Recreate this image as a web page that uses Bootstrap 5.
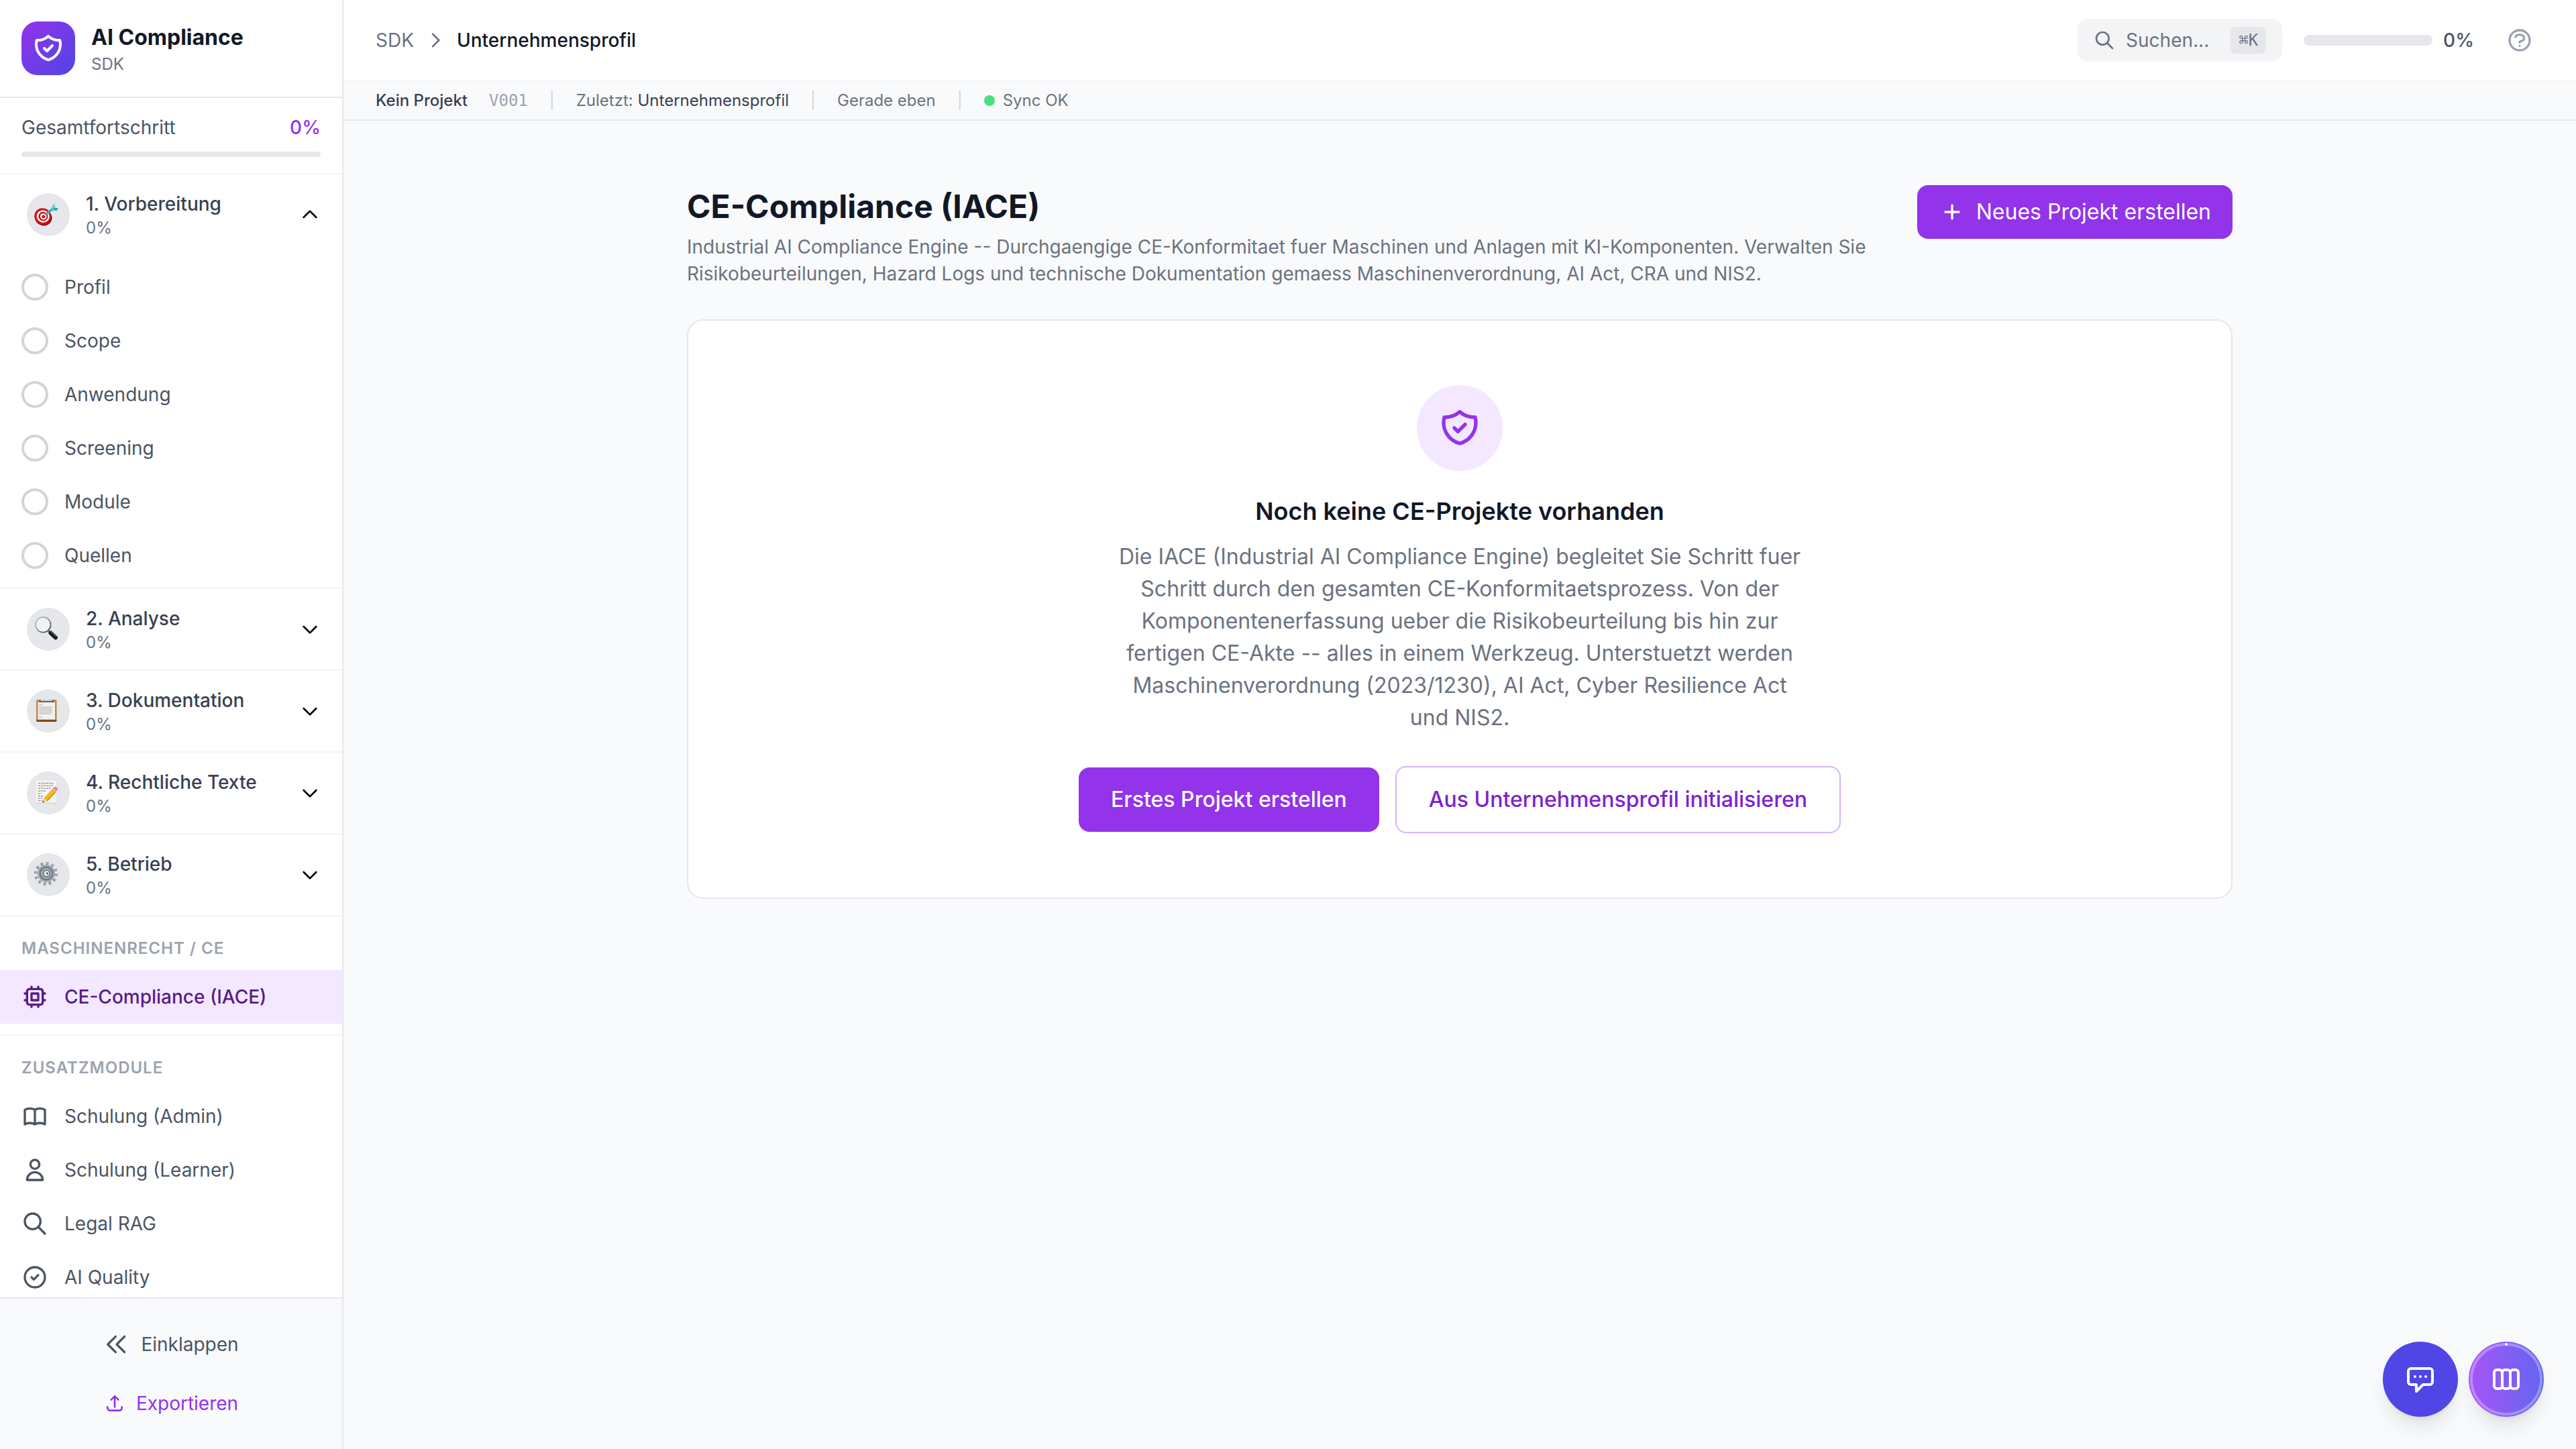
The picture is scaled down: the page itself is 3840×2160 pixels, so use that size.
<!DOCTYPE html>
<html lang="de">
<head>
<meta charset="utf-8">
<meta name="viewport" content="width=device-width, initial-scale=1">
<title>AI Compliance SDK – CE-Compliance (IACE)</title>
<link href="https://cdn.jsdelivr.net/npm/bootstrap@5.3.0/dist/css/bootstrap.min.css" rel="stylesheet">
<style>
  :root {
    --g50: #f9fafb; --g100: #f3f4f6; --g200: #e5e7eb; --g300: #d1d5db; --g400: #9ca3af;
    --g500: #6b7280; --g600: #4b5563; --g700: #374151; --g900: #111827; --violet: #9333ea;
  }
  body { font-family: Inter, "Liberation Sans", sans-serif; font-size: 32px; line-height: 48px; color: var(--g900); background: var(--g50); }
  a { text-decoration: none; }
  button { border: 0; background: none; color: inherit; }
  svg { flex: none; display: block; }
  .line-ico { fill: none; stroke: currentColor; stroke-width: 2; stroke-linecap: round; stroke-linejoin: round; }
  .ico-s { width: 32px; height: 32px; }
  .ico-m { width: 40px; height: 40px; }
  .ico-l { width: 48px; height: 48px; }
  .ico-xl { width: 64px; height: 64px; }
  .gap-xs { gap: 12px; } .gap-s { gap: 16px; } .gap-m { gap: 24px; } .gap-l { gap: 32px; }
  .fs-xs { font-size: 24px; line-height: 32px; }
  .fs-sm { font-size: 28px; line-height: 40px; }
  .fw-med { font-weight: 500; }
  .c400 { color: var(--g400); } .c500 { color: var(--g500); } .c600 { color: var(--g600); } .c700 { color: var(--g700); } .c900 { color: var(--g900); }
  .c-violet { color: var(--violet); }

  .side { width: 512px; background: #fff; border-right: 2px solid var(--g200); }
  .brand-box { padding: 32px; border-bottom: 2px solid var(--g200); }
  .brand-logo { width: 80px; height: 80px; border-radius: 24px; background: linear-gradient(135deg, #9333ea, #4f46e5); }
  .total { padding: 24px 32px; border-bottom: 2px solid var(--g100); }
  .track { height: 8px; border-radius: 8px; background: var(--g200); }
  .total .track { margin-top: 16px; }
  .side-nav { overflow-y: auto; scrollbar-width: none; min-height: 0; }
  .phase { border-bottom: 2px solid var(--g100); }
  .phase-btn { padding: 24px 32px 24px 40px; text-align: left; color: #000; }
  .phase-ico { width: 64px; height: 64px; border-radius: 50%; background: var(--g200); flex: none; }
  .phase-ico svg { width: 64px; height: 64px; }
  .steps { padding: 8px 0; }
  .side-link { padding: 20px 32px; color: var(--g600); }
  .side-link.current { background: #f3e8ff; color: #581c87; font-weight: 500; }
  .ring { width: 40px; height: 40px; border: 4px solid var(--g300); border-radius: 50%; flex: none; }
  .extra { padding: 16px 0; border-bottom: 2px solid var(--g100); }
  .extra-title { padding: 16px 32px; margin: 0; font-weight: 600; color: var(--g400); letter-spacing: 1px; text-transform: uppercase; }
  .side-foot { padding: 32px; border-top: 2px solid var(--g200); background: var(--g50); }
  .side-foot button { padding: 16px 32px; }

  .topbar { height: 122px; padding: 0 48px; background: #fff; border-bottom: 2px solid var(--g100); }
  .search-btn { padding: 12px 24px; border-radius: 16px; background: var(--g100); }
  .key { margin-left: 16px; padding: 4px 12px; border-radius: 8px; background: var(--g200); font-family: "DejaVu Sans Mono", "Liberation Mono", monospace; font-size: 24px; line-height: 32px; color: var(--g500); }
  .track-top { width: 192px; height: 16px; }
  .help-btn { padding: 16px; }
  .status { padding: 12px 48px; border-bottom: 2px solid var(--g200); }
  .ver { font-family: "DejaVu Sans Mono", "Liberation Mono", monospace; }
  .sep { color: var(--g300); }
  .dot { width: 16px; height: 16px; border-radius: 50%; background: #4ade80; }

  .page { padding: 96px 48px; }
  .page-in { max-width: 2304px; margin: 0 auto; }
  .page h1 { font-size: 48px; line-height: 64px; font-weight: 700; margin: 0 0 8px; }
  .act { border-radius: 16px; white-space: nowrap; }
  .act-new { padding: 16px 32px; background: var(--violet); color: #fff; }
  .act-first { padding: 24px 48px; background: var(--violet); color: #fff; }
  .act-init { padding: 24px 48px; border: 2px solid #d8b4fe; color: #7e22ce; }
  .empty { margin-top: 48px; padding: 96px; border: 2px solid var(--g200); border-radius: 24px; background: #fff; }
  .empty-ico { width: 128px; height: 128px; border-radius: 50%; background: #f3e8ff; color: var(--violet); }
  .empty h2 { margin: 32px 0 16px; font-size: 36px; line-height: 56px; font-weight: 600; }
  .empty p { max-width: 1024px; margin: 0 0 48px; }

  .fabs { right: 48px; bottom: 48px; }
  .fab { width: 112px; height: 112px; border-radius: 50%; color: #fff; box-shadow: 0 20px 30px -6px rgba(0,0,0,.1), 0 8px 12px -8px rgba(0,0,0,.1); }
  .fab-chat { background: #4f46e5; }
  .fab-flow { background: linear-gradient(90deg, #a855f7, #6366f1); }
  .fab-ring { left: 0; top: 0; width: 112px; height: 112px; }
</style>
</head>
<body>
<div class="d-flex vh-100 overflow-hidden">

  <aside class="side d-flex flex-column flex-shrink-0">
    <a href="#" class="brand-box d-flex align-items-center gap-m">
      <span class="brand-logo d-flex align-items-center justify-content-center text-white">
        <svg class="line-ico ico-l" viewBox="0 0 24 24"><path d="M9 12l2 2 4-4m5.618-4.016A11.955 11.955 0 0112 2.944a11.955 11.955 0 01-8.618 3.04A12.02 12.02 0 003 9c0 5.591 3.824 10.29 9 11.622 5.176-1.332 9-6.03 9-11.622 0-1.042-.133-2.052-.382-3.016z"/></svg>
      </span>
      <span class="d-flex flex-column"><span class="fw-bold c900">AI Compliance</span><span class="fs-xs c500">SDK</span></span>
    </a>

    <div class="total fs-sm">
      <div class="d-flex justify-content-between"><span class="c600">Gesamtfortschritt</span><span class="fw-med c-violet">0%</span></div>
      <div class="track"></div>
    </div>

    <nav class="side-nav flex-grow-1" aria-label="SDK">
      <div class="phase">
        <button type="button" class="phase-btn w-100 d-flex align-items-center gap-m">
          <span class="phase-ico">
            <svg viewBox="0 0 64 64"><g transform="rotate(20 24 35)"><ellipse cx="25" cy="36" rx="13" ry="12" fill="#8f0d14"/><ellipse cx="23.500" cy="34.500" rx="12.500" ry="12" fill="#d5141c"/><ellipse cx="24" cy="34.500" rx="9.600" ry="9" fill="#fff"/><ellipse cx="24.300" cy="34.500" rx="7.200" ry="6.800" fill="#c9151d"/><ellipse cx="24.600" cy="34.500" rx="4.800" ry="4.500" fill="#fff"/><ellipse cx="24.800" cy="34.500" rx="2.600" ry="2.500" fill="#b5121a"/></g><path d="M25 34l6-5" stroke="#d9a520" stroke-width="1.500"/><path d="M30 30.500l9-8" stroke="#31b2b8" stroke-width="3.500" stroke-linecap="round"/><path d="M37 24l1-6 4-2-.5 5.500 5.500 1-3 3.500-6 .5z" fill="#5fd0d6"/><path d="M38.500 23.500l3-2 5.500 1-3 3.500z" fill="#2aa0a8"/></svg>
          </span>
          <span class="d-flex flex-column flex-grow-1"><span class="fs-sm fw-med c700">1. Vorbereitung</span><span class="fs-xs c500">0%</span></span>
          <svg class="line-ico ico-s" viewBox="0 0 24 24"><path d="M5 15l7-7 7 7"/></svg>
        </button>
        <div class="steps fs-sm">
          <a href="#" class="side-link d-flex gap-m"><span class="ring"></span>Profil</a>
          <a href="#" class="side-link d-flex gap-m"><span class="ring"></span>Scope</a>
          <a href="#" class="side-link d-flex gap-m"><span class="ring"></span>Anwendung</a>
          <a href="#" class="side-link d-flex gap-m"><span class="ring"></span>Screening</a>
          <a href="#" class="side-link d-flex gap-m"><span class="ring"></span>Module</a>
          <a href="#" class="side-link d-flex gap-m"><span class="ring"></span>Quellen</a>
        </div>
      </div>

      <div class="phase">
        <button type="button" class="phase-btn w-100 d-flex align-items-center gap-m">
          <span class="phase-ico">
            <svg viewBox="0 0 64 64"><defs><linearGradient id="lens" x1="0" y1="0" x2="1" y2="1"><stop offset="0" stop-color="#a9cdee"/><stop offset=".4" stop-color="#a4a6a8"/><stop offset="1" stop-color="#3d3f41"/></linearGradient></defs><path d="M32 34l3 3" stroke="#77797b" stroke-width="3"/><path d="M35.500 37.500l7.500 7" stroke="#16181a" stroke-width="6" stroke-linecap="round"/><path d="M36 35.800l7.500 7" stroke="#5b6066" stroke-width="1.500" stroke-linecap="round"/><circle cx="24.300" cy="25.300" r="11.300" fill="#f1f2f3" stroke="url(#lens)" stroke-width="1.800"/></svg>
          </span>
          <span class="d-flex flex-column flex-grow-1"><span class="fs-sm fw-med c700">2. Analyse</span><span class="fs-xs c500">0%</span></span>
          <svg class="line-ico ico-s" viewBox="0 0 24 24"><path d="M19 9l-7 7-7-7"/></svg>
        </button>
      </div>

      <div class="phase">
        <button type="button" class="phase-btn w-100 d-flex align-items-center gap-m">
          <span class="phase-ico">
            <svg viewBox="0 0 64 64"><rect x="14" y="15" width="30.500" height="33" rx="2.500" fill="#c18a42"/><path d="M14 45h30.500v.8a2.200 2.200 0 01-2.200 2.200H16.200a2.200 2.200 0 01-2.200-2.200z" fill="#7a4e18"/><path d="M16.500 18h25.500v26.500H16.500z" fill="#f1f1f0"/><path d="M18 22.500h6M18 26h20M18 28.500h20M18 31h20M18 33.500h20M18 36h18M18 41h5" stroke="#c3c3c4" stroke-width="1.300"/><path d="M18 16.500h23v2.500H18z" fill="#6b6259"/><path d="M21 17c0-3 4-2.500 5.500-3a3 3 0 015.500 0c1.500.5 5.500 0 5.500 3z" fill="#c9d3dc"/><circle cx="29.200" cy="14" r="1.300" fill="#fff"/></svg>
          </span>
          <span class="d-flex flex-column flex-grow-1"><span class="fs-sm fw-med c700">3. Dokumentation</span><span class="fs-xs c500">0%</span></span>
          <svg class="line-ico ico-s" viewBox="0 0 24 24"><path d="M19 9l-7 7-7-7"/></svg>
        </button>
      </div>

      <div class="phase">
        <button type="button" class="phase-btn w-100 d-flex align-items-center gap-m">
          <span class="phase-ico">
            <svg viewBox="0 0 64 64"><path d="M14 13.500h30v34.500H14z" fill="#f4f4f3"/><path d="M14 46.500h30v1.500H14z" fill="#d5d5d4"/><path d="M17 18l5-.8 4 .8 7-.8 7 .8M17 21.500l7-.8 2 .8 13-.6M17 25.500l4-1 8 1 7-1M17 29.500l6-.8 6 .8M16.500 33l5-.5M17 36.500h7M17 40l6-.6M17 44l4-1 1.500.5" fill="none" stroke="#6f6f70" stroke-width="1" stroke-dasharray="3 1"/><path d="M23.500 46l1.800-6.500L38.500 25.500l5 4.500L30.500 44z" fill="#f5b81c"/><path d="M29.800 43l13-13.200 1 .8L30.500 44.800z" fill="#c98a10"/><path d="M25.300 39.500l5.200 4.500-7 2z" fill="#efcf98"/><path d="M23.300 46.200l.8-2.700 2 1.900z" fill="#333"/><path d="M37.500 26.500l1.800-1.800 4.800 4.500-1.800 1.800z" fill="#b9bec4"/><path d="M39.200 24.800c1.800-2.500 3.800-2.500 5.600-.9s1.500 3.500-.7 5.400z" fill="#ee7f8b"/></svg>
          </span>
          <span class="d-flex flex-column flex-grow-1"><span class="fs-sm fw-med c700">4. Rechtliche Texte</span><span class="fs-xs c500">0%</span></span>
          <svg class="line-ico ico-s" viewBox="0 0 24 24"><path d="M19 9l-7 7-7-7"/></svg>
        </button>
      </div>

      <div class="phase">
        <button type="button" class="phase-btn w-100 d-flex align-items-center gap-m">
          <span class="phase-ico">
            <svg viewBox="0 0 64 64"><circle cx="28.500" cy="30.500" r="15" fill="none" stroke="#59544f" stroke-width="4.500" stroke-dasharray="3.200 4.654"/><circle cx="29.300" cy="30" r="15" fill="none" stroke="#a9b4bf" stroke-width="4.500" stroke-dasharray="3.200 4.654"/><circle cx="29" cy="30" r="13" fill="#a3adb6"/><circle cx="29" cy="30" r="10.500" fill="#6d757c"/><circle cx="29" cy="30" r="8.500" fill="#9da6ae"/><circle cx="29.500" cy="30" r="5.500" fill="#6a7177"/><circle cx="29.500" cy="30" r="4" fill="#e3e6ea"/><circle cx="30.500" cy="30" r="1.800" fill="#666b70"/></svg>
          </span>
          <span class="d-flex flex-column flex-grow-1"><span class="fs-sm fw-med c700">5. Betrieb</span><span class="fs-xs c500">0%</span></span>
          <svg class="line-ico ico-s" viewBox="0 0 24 24"><path d="M19 9l-7 7-7-7"/></svg>
        </button>
      </div>

      <div class="extra fs-sm">
        <h2 class="extra-title fs-xs">Maschinenrecht / CE</h2>
        <a href="#" class="side-link current d-flex gap-m" aria-current="page"><svg class="line-ico ico-m" viewBox="0 0 24 24"><path d="M9 3v2m6-2v2M9 19v2m6-2v2M5 9H3m2 6H3m18-6h-2m2 6h-2M7 19h10a2 2 0 002-2V7a2 2 0 00-2-2H7a2 2 0 00-2 2v10a2 2 0 002 2zM9 9h6v6H9V9z"/></svg>CE-Compliance (IACE)</a>
      </div>

      <div class="extra fs-sm">
        <h2 class="extra-title fs-xs">Zusatzmodule</h2>
        <a href="#" class="side-link d-flex gap-m"><svg class="line-ico ico-m" viewBox="0 0 24 24"><path d="M12 6.253v13m0-13C10.832 5.477 9.246 5 7.500 5S4.168 5.477 3 6.253v13C4.168 18.477 5.754 18 7.500 18s3.332.477 4.500 1.253m0-13C13.168 5.477 14.754 5 16.500 5c1.747 0 3.332.477 4.500 1.253v13C19.832 18.477 18.247 18 16.500 18c-1.746 0-3.332.477-4.500 1.253"/></svg>Schulung (Admin)</a>
        <a href="#" class="side-link d-flex gap-m"><svg class="line-ico ico-m" viewBox="0 0 24 24"><path d="M16 7a4 4 0 11-8 0 4 4 0 018 0zM12 14a7 7 0 00-7 7h14a7 7 0 00-7-7z"/></svg>Schulung (Learner)</a>
        <a href="#" class="side-link d-flex gap-m"><svg class="line-ico ico-m" viewBox="0 0 24 24"><path d="M21 21l-6-6m2-5a7 7 0 11-14 0 7 7 0 0114 0z"/></svg>Legal RAG</a>
        <a href="#" class="side-link d-flex gap-m"><svg class="line-ico ico-m" viewBox="0 0 24 24"><path d="M9 12l2 2 4-4m6 2a9 9 0 11-18 0 9 9 0 0118 0z"/></svg>AI Quality</a>
      </div>
    </nav>

    <div class="side-foot d-flex flex-column gap-s fs-sm">
      <button type="button" class="d-flex align-items-center justify-content-center gap-s c600"><svg class="line-ico ico-m" viewBox="0 0 24 24"><path d="M11 19l-7-7 7-7m8 14l-7-7 7-7"/></svg>Einklappen</button>
      <button type="button" class="d-flex align-items-center justify-content-center gap-s c-violet"><svg class="line-ico ico-s" viewBox="0 0 24 24"><path d="M4 16v1a3 3 0 003 3h10a3 3 0 003-3v-1m-4-8l-4-4m0 0L8 8m4-4v12"/></svg>Exportieren</button>
    </div>
  </aside>

  <div class="d-flex flex-column flex-grow-1 overflow-hidden">
    <header class="topbar d-flex align-items-center justify-content-between fs-sm">
      <nav class="d-flex align-items-center gap-s c500" aria-label="Breadcrumb">
        <a href="#" class="c500">SDK</a>
        <svg class="line-ico ico-s" viewBox="0 0 24 24"><path d="M9 5l7 7-7 7"/></svg>
        <span class="fw-med c900">Unternehmensprofil</span>
      </nav>
      <div class="d-flex align-items-center gap-l">
        <button type="button" class="search-btn d-flex align-items-center gap-s c500">
          <svg class="line-ico ico-s" viewBox="0 0 24 24"><path d="M21 21l-6-6m2-5a7 7 0 11-14 0 7 7 0 0114 0z"/></svg>
          <span>Suchen...</span><kbd class="key">⌘K</kbd>
        </button>
        <div class="d-flex align-items-center gap-s"><div class="track track-top"></div><span class="fw-med c600">0%</span></div>
        <button type="button" class="help-btn c400" aria-label="Hilfe"><svg class="line-ico ico-m" viewBox="0 0 24 24"><path d="M8.228 9c.549-1.165 2.030-2 3.772-2 2.210 0 4 1.343 4 3 0 1.400-1.278 2.575-3.006 2.907-.542.104-.994.540-.994 1.093m0 3h.010M21 12a9 9 0 11-18 0 9 9 0 0118 0z"/></svg></button>
      </div>
    </header>

    <div class="status d-flex align-items-center gap-l fs-xs c500">
      <span class="fw-med c700">Kein Projekt</span>
      <span class="ver c400">V001</span>
      <span class="sep">|</span>
      <span>Zuletzt: <span class="c700">Unternehmensprofil</span></span>
      <span class="sep">|</span>
      <span>Gerade eben</span>
      <span class="sep">|</span>
      <span class="d-flex align-items-center gap-xs"><span class="dot"></span>Sync OK</span>
    </div>

    <main class="page flex-grow-1 overflow-auto">
      <div class="page-in">
        <div class="d-flex align-items-start justify-content-between">
          <div>
            <h1>CE-Compliance (IACE)</h1>
            <p class="fs-sm c500 mb-0">Industrial AI Compliance Engine -- Durchgaengige CE-Konformitaet fuer Maschinen und Anlagen mit KI-Komponenten. Verwalten Sie Risikobeurteilungen, Hazard Logs und technische Dokumentation gemaess Maschinenverordnung, AI Act, CRA und NIS2.</p>
          </div>
          <button type="button" class="act act-new d-flex align-items-center gap-s flex-shrink-0"><svg class="line-ico ico-m" viewBox="0 0 24 24"><path d="M12 6v6m0 0v6m0-6h6m-6 0H6"/></svg>Neues Projekt erstellen</button>
        </div>

        <section class="empty d-flex flex-column align-items-center text-center">
          <div class="empty-ico d-flex align-items-center justify-content-center">
            <svg class="line-ico ico-xl" viewBox="0 0 24 24"><path d="M9 12l2 2 4-4m5.618-4.016A11.955 11.955 0 0112 2.944a11.955 11.955 0 01-8.618 3.04A12.02 12.02 0 003 9c0 5.591 3.824 10.29 9 11.622 5.176-1.332 9-6.03 9-11.622 0-1.042-.133-2.052-.382-3.016z"/></svg>
          </div>
          <h2>Noch keine CE-Projekte vorhanden</h2>
          <p class="c500">Die IACE (Industrial AI Compliance Engine) begleitet Sie Schritt fuer Schritt durch den gesamten CE-Konformitaetsprozess. Von der Komponentenerfassung ueber die Risikobeurteilung bis hin zur fertigen CE-Akte -- alles in einem Werkzeug. Unterstuetzt werden Maschinenverordnung (2023/1230), AI Act, Cyber Resilience Act und NIS2.</p>
          <div class="d-flex align-items-center justify-content-center gap-m">
            <button type="button" class="act act-first fw-med">Erstes Projekt erstellen</button>
            <button type="button" class="act act-init fw-med">Aus Unternehmensprofil initialisieren</button>
          </div>
        </section>
      </div>
    </main>
  </div>
</div>

<div class="fabs position-fixed d-flex gap-s">
  <button type="button" class="fab fab-chat d-flex align-items-center justify-content-center" aria-label="Chat"><svg class="line-ico ico-l" viewBox="0 0 24 24"><path d="M8 10h.010M12 10h.010M16 10h.010M9 16H5a2 2 0 01-2-2V6a2 2 0 012-2h14a2 2 0 012 2v8a2 2 0 01-2 2h-5l-5 5v-5z"/></svg></button>
  <button type="button" class="fab fab-flow position-relative d-flex align-items-center justify-content-center" aria-label="Pipeline">
    <svg class="fab-ring position-absolute" viewBox="0 0 112 112" fill="none" stroke="#fff" stroke-width="4"><circle cx="56" cy="56" r="52" stroke-opacity=".3"/><path d="M56 4h.010" stroke-linecap="round"/></svg>
    <svg class="line-ico ico-l" viewBox="0 0 24 24"><path d="M9 17V7m0 10a2 2 0 01-2 2H5a2 2 0 01-2-2V7a2 2 0 012-2h2a2 2 0 012 2m0 10a2 2 0 002 2h2a2 2 0 002-2M9 7a2 2 0 012-2h2a2 2 0 012 2m0 10V7m0 10a2 2 0 002 2h2a2 2 0 002-2V7a2 2 0 00-2-2h-2a2 2 0 00-2 2"/></svg>
  </button>
</div>
<script src="https://cdn.jsdelivr.net/npm/bootstrap@5.3.0/dist/js/bootstrap.bundle.min.js"></script>
</body>
</html>
